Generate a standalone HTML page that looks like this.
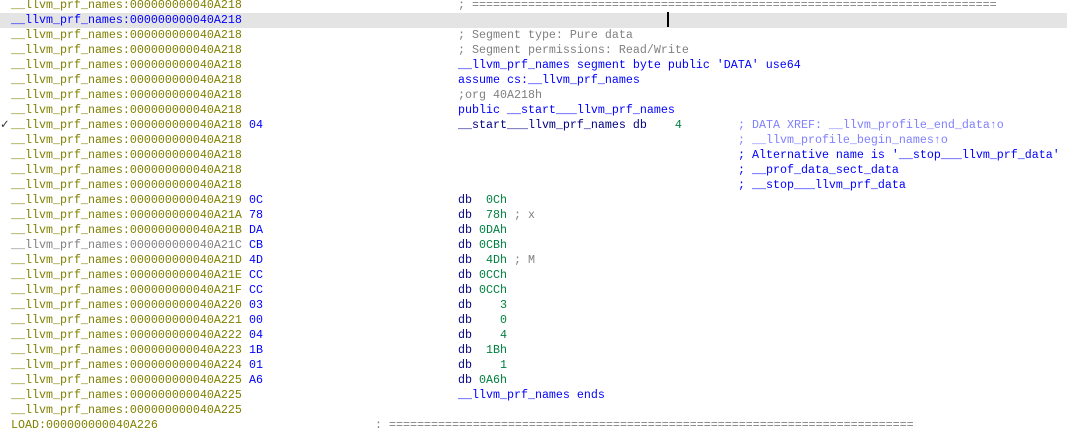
<!DOCTYPE html>
<html><head><meta charset="utf-8"><style>
html,body{margin:0;padding:0;background:#fff;width:1067px;height:430px;overflow:hidden;}
body{font-family:"Liberation Mono",monospace;font-size:11.67px;position:relative;}
.r{position:absolute;left:0;width:1067px;height:15px;line-height:15px;white-space:pre;}
.r span{position:absolute;top:0;}
.hl{background:#e4e4e4;}
.a{left:11px;color:#808000;}
.ab{left:11px;color:#0000ff;}
.ag{left:11px;color:#808080;}
.b{left:249px;color:#0000ff;}
.i{left:458px;color:#000080;}
.c{color:#808080;}
.d{color:#0000ff;}
.n{color:#008040;font-weight:normal;}
.cc{color:#808080;font-weight:normal;}
.x{left:738px;}
.xg{color:#8080ff;}
</style></head><body>
<div class="r" style="top:-2px"><span class="a">__llvm_prf_names:000000000040A218</span><span class="i c">; ===========================================================================</span></div>
<div class="r hl" style="top:13px"><span class="ab">__llvm_prf_names:000000000040A218</span><span style="left:667px;top:-1px;width:2px;height:15px;background:#000"></span></div>
<div class="r" style="top:28px"><span class="a">__llvm_prf_names:000000000040A218</span><span class="i c">; Segment type: Pure data</span></div>
<div class="r" style="top:43px"><span class="a">__llvm_prf_names:000000000040A218</span><span class="i c">; Segment permissions: Read/Write</span></div>
<div class="r" style="top:58px"><span class="a">__llvm_prf_names:000000000040A218</span><span class="i d">__llvm_prf_names segment byte public 'DATA' use64</span></div>
<div class="r" style="top:73px"><span class="a">__llvm_prf_names:000000000040A218</span><span class="i d">assume cs:__llvm_prf_names</span></div>
<div class="r" style="top:88px"><span class="a">__llvm_prf_names:000000000040A218</span><span class="i c">;org 40A218h</span></div>
<div class="r" style="top:103px"><span class="a">__llvm_prf_names:000000000040A218</span><span class="i d">public __start___llvm_prf_names</span></div>
<div class="r" style="top:118px"><span style="left:0;color:#333">✓</span><span class="a">__llvm_prf_names:000000000040A218</span><span class="b">04</span><span class="i">__start___llvm_prf_names db    <b class="n">4</b></span><span class="x xg">; DATA XREF: __llvm_profile_end_data↑o</span></div>
<div class="r" style="top:133px"><span class="a">__llvm_prf_names:000000000040A218</span><span class="x xg">; __llvm_profile_begin_names↑o</span></div>
<div class="r" style="top:148px"><span class="a">__llvm_prf_names:000000000040A218</span><span class="x d">; Alternative name is '__stop___llvm_prf_data'</span></div>
<div class="r" style="top:163px"><span class="a">__llvm_prf_names:000000000040A218</span><span class="x d">; __prof_data_sect_data</span></div>
<div class="r" style="top:178px"><span class="a">__llvm_prf_names:000000000040A218</span><span class="x d">; __stop___llvm_prf_data</span></div>
<div class="r" style="top:193px"><span class="a">__llvm_prf_names:000000000040A219</span><span class="b">0C</span><span class="i">db  <b class="n">0Ch</b></span></div>
<div class="r" style="top:208px"><span class="a">__llvm_prf_names:000000000040A21A</span><span class="b">78</span><span class="i">db  <b class="n">78h</b> <b class="cc">; x</b></span></div>
<div class="r" style="top:223px"><span class="a">__llvm_prf_names:000000000040A21B</span><span class="b">DA</span><span class="i">db <b class="n">0DAh</b></span></div>
<div class="r" style="top:238px"><span class="ag">__llvm_prf_names:000000000040A21C</span><span class="b">CB</span><span class="i">db <b class="n">0CBh</b></span></div>
<div class="r" style="top:253px"><span class="a">__llvm_prf_names:000000000040A21D</span><span class="b">4D</span><span class="i">db  <b class="n">4Dh</b> <b class="cc">; M</b></span></div>
<div class="r" style="top:268px"><span class="a">__llvm_prf_names:000000000040A21E</span><span class="b">CC</span><span class="i">db <b class="n">0CCh</b></span></div>
<div class="r" style="top:283px"><span class="a">__llvm_prf_names:000000000040A21F</span><span class="b">CC</span><span class="i">db <b class="n">0CCh</b></span></div>
<div class="r" style="top:298px"><span class="a">__llvm_prf_names:000000000040A220</span><span class="b">03</span><span class="i">db    <b class="n">3</b></span></div>
<div class="r" style="top:313px"><span class="a">__llvm_prf_names:000000000040A221</span><span class="b">00</span><span class="i">db    <b class="n">0</b></span></div>
<div class="r" style="top:328px"><span class="a">__llvm_prf_names:000000000040A222</span><span class="b">04</span><span class="i">db    <b class="n">4</b></span></div>
<div class="r" style="top:343px"><span class="a">__llvm_prf_names:000000000040A223</span><span class="b">1B</span><span class="i">db  <b class="n">1Bh</b></span></div>
<div class="r" style="top:358px"><span class="a">__llvm_prf_names:000000000040A224</span><span class="b">01</span><span class="i">db    <b class="n">1</b></span></div>
<div class="r" style="top:373px"><span class="a">__llvm_prf_names:000000000040A225</span><span class="b">A6</span><span class="i">db <b class="n">0A6h</b></span></div>
<div class="r" style="top:388px"><span class="a">__llvm_prf_names:000000000040A225</span><span class="i d">__llvm_prf_names ends</span></div>
<div class="r" style="top:403px"><span class="a">__llvm_prf_names:000000000040A225</span></div>
<div class="r" style="top:418px"><span class="a">LOAD:000000000040A226</span><span class="c" style="left:375px">: ===========================================================================</span></div>
</body></html>
